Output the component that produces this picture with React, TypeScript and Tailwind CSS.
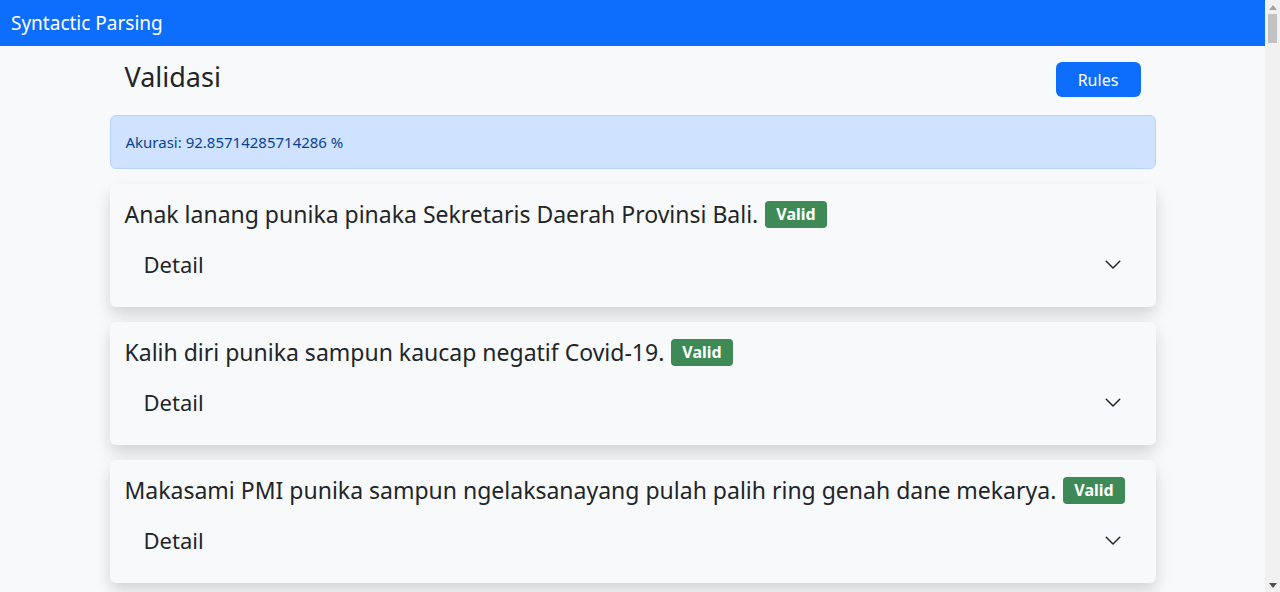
import React from "react";

const sentences: string[] = [
  "Anak lanang punika pinaka Sekretaris Daerah Provinsi Bali.",
  "Kalih diri punika sampun kaucap negatif Covid-19.",
  "Makasami PMI punika sampun ngelaksanayang pulah palih ring genah dane mekarya.",
];

function Chevron() {
  return (
    <svg width="18" height="18" viewBox="0 0 16 16" fill="none" className="text-[#212529]">
      <path d="M2 5.5L8 11.5L14 5.5" stroke="currentColor" strokeWidth="1.3" strokeLinecap="round" strokeLinejoin="round" />
    </svg>
  );
}

function Card({ text }: { text: string }) {
  return (
    <div className="rounded-[6px] bg-[#f8f9fa] shadow-[0_0.5rem_1rem_rgba(0,0,0,0.15)] px-[15px] pt-[15px] pb-[16px]">
      <div className="flex h-[30px] items-center text-[23px] text-[#212529] leading-[30px]">
        <span>{text}</span>
        <span className="ml-[7px] inline-flex h-[27px] items-center rounded-[4px] bg-[#3d8a56] px-[11px] text-[16px] font-bold text-white leading-none">
          Valid
        </span>
      </div>
      <div className="mt-[8px] flex h-[54px] items-center justify-between pl-[19px] pr-[19px]">
        <span className="text-[22px] text-[#212529]">Detail</span>
        <Chevron />
      </div>
    </div>
  );
}

function Scrollbar() {
  return (
    <div className="fixed right-0 top-0 flex h-screen w-[15px] flex-col items-center bg-[#f1f1f1]">
      <div className="flex h-[14px] w-full items-center justify-center">
        <svg width="8" height="5" viewBox="0 0 8 5">
          <path d="M0 5L4 0L8 5Z" fill="#a3a3a3" />
        </svg>
      </div>
      <div className="h-[29px] w-[9px] bg-[#c1c1c1]" />
      <div className="flex-1" />
      <div className="flex h-[14px] w-full items-center justify-center">
        <svg width="8" height="5" viewBox="0 0 8 5">
          <path d="M0 0L8 0L4 5Z" fill="#505050" />
        </svg>
      </div>
    </div>
  );
}

export default function App() {
  return (
    <div className="min-h-screen bg-[#f8f9fa] pr-[15px] text-[#212529]" style={{ fontFamily: '"Noto Sans", sans-serif' }}>
      <nav className="flex h-[46px] items-center bg-[#0d6efd] px-[11px]">
        <span className="text-[19px] text-white">Syntactic Parsing</span>
      </nav>
      <main className="mx-auto w-[1046px] pb-[10px]">
        <div className="mt-[16px] flex h-[35px] items-center justify-between px-[15px]">
          <h3 className="mb-[6px] text-[27px] leading-none text-[#212529]">Validasi</h3>
          <button className="h-[35px] w-[85px] rounded-[6px] bg-[#0d6efd] text-[16px] text-white">Rules</button>
        </div>
        <div className="mt-[18px] flex h-[54px] items-center rounded-[6px] border border-[#b6d4fe] bg-[#cfe2ff] px-[15px] text-[15px] text-[#084298]">
          Akurasi: 92.85714285714286 %
        </div>
        <div className="mt-[15px] flex flex-col gap-[15px]">
          {sentences.map((s, i) => (
            <Card key={i} text={s} />
          ))}
        </div>
      </main>
      <Scrollbar />
    </div>
  );
}
